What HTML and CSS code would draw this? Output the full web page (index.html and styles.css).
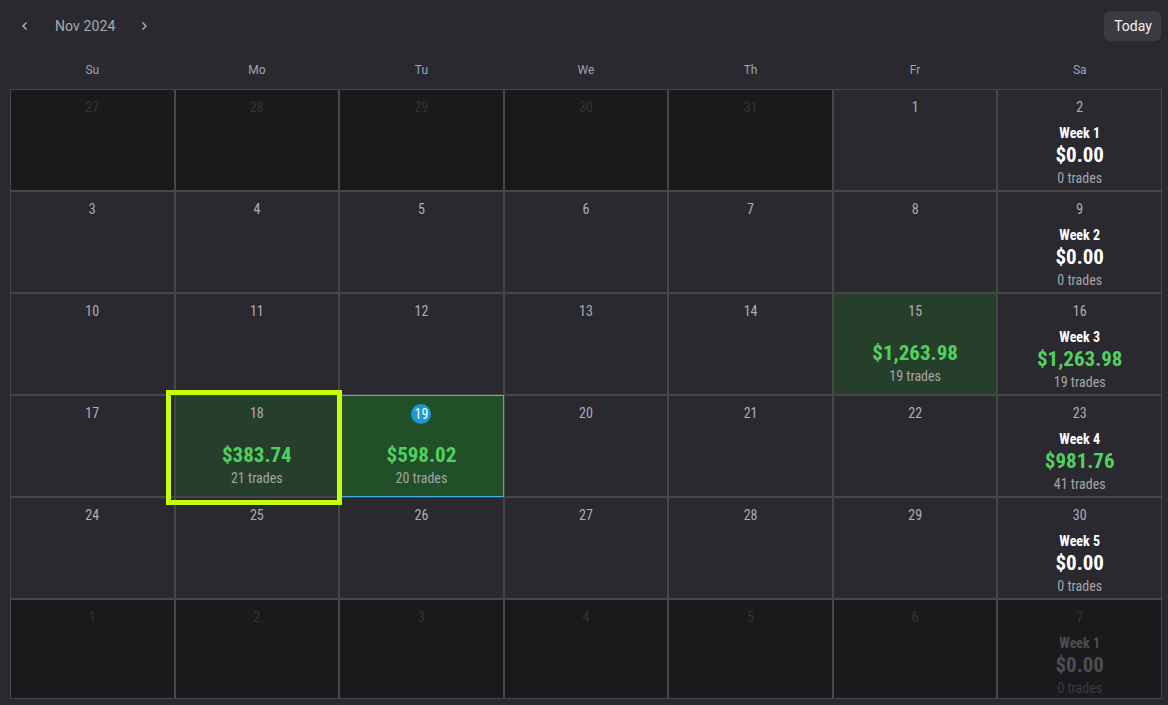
FILE: index.html
```html
<!DOCTYPE html>
<html>
<head>
<meta charset="utf-8">
<link rel="stylesheet" href="styles.css">
</head>
<body>
<div class="app">
  <header class="toolbar">
    <div class="nav">
      <button class="arrow" aria-label="Previous month"><svg width="10" height="10" viewBox="0 0 10 10"><path d="M6.5 1.5 L3 5 L6.5 8.5" fill="none" stroke="#b8b8c0" stroke-width="1.3"/></svg></button>
      <span class="month">Nov 2024</span>
      <button class="arrow" aria-label="Next month"><svg width="10" height="10" viewBox="0 0 10 10"><path d="M3.5 1.5 L7 5 L3.5 8.5" fill="none" stroke="#b8b8c0" stroke-width="1.3"/></svg></button>
    </div>
    <button class="today-btn">Today</button>
  </header>
  <div class="weekdays">
    <div>Su</div><div>Mo</div><div>Tu</div><div>We</div><div>Th</div><div>Fr</div><div>Sa</div>
  </div>
  <div class="grid">
    <!-- row 1 -->
    <div class="cell out"><span class="date">27</span></div>
    <div class="cell out"><span class="date">28</span></div>
    <div class="cell out"><span class="date">29</span></div>
    <div class="cell out"><span class="date">30</span></div>
    <div class="cell out"><span class="date">31</span></div>
    <div class="cell"><span class="date">1</span></div>
    <div class="cell week"><span class="date">2</span><span class="wk">Week 1</span><span class="amt">$0.00</span><span class="trades">0 trades</span></div>
    <!-- row 2 -->
    <div class="cell"><span class="date">3</span></div>
    <div class="cell"><span class="date">4</span></div>
    <div class="cell"><span class="date">5</span></div>
    <div class="cell"><span class="date">6</span></div>
    <div class="cell"><span class="date">7</span></div>
    <div class="cell"><span class="date">8</span></div>
    <div class="cell week"><span class="date">9</span><span class="wk">Week 2</span><span class="amt">$0.00</span><span class="trades">0 trades</span></div>
    <!-- row 3 -->
    <div class="cell"><span class="date">10</span></div>
    <div class="cell"><span class="date">11</span></div>
    <div class="cell"><span class="date">12</span></div>
    <div class="cell"><span class="date">13</span></div>
    <div class="cell"><span class="date">14</span></div>
    <div class="cell profit"><span class="date">15</span><span class="amt pos day-amt">$1,263.98</span><span class="trades">19 trades</span></div>
    <div class="cell week"><span class="date">16</span><span class="wk">Week 3</span><span class="amt pos">$1,263.98</span><span class="trades">19 trades</span></div>
    <!-- row 4 -->
    <div class="cell"><span class="date">17</span></div>
    <div class="cell profit selected"><span class="date">18</span><span class="amt pos day-amt">$383.74</span><span class="trades">21 trades</span><div class="highlight"></div></div>
    <div class="cell today"><span class="date today-badge">19</span><span class="amt pos day-amt">$598.02</span><span class="trades">20 trades</span></div>
    <div class="cell"><span class="date">20</span></div>
    <div class="cell"><span class="date">21</span></div>
    <div class="cell"><span class="date">22</span></div>
    <div class="cell week"><span class="date">23</span><span class="wk">Week 4</span><span class="amt pos">$981.76</span><span class="trades">41 trades</span></div>
    <!-- row 5 -->
    <div class="cell"><span class="date">24</span></div>
    <div class="cell"><span class="date">25</span></div>
    <div class="cell"><span class="date">26</span></div>
    <div class="cell"><span class="date">27</span></div>
    <div class="cell"><span class="date">28</span></div>
    <div class="cell"><span class="date">29</span></div>
    <div class="cell week"><span class="date">30</span><span class="wk">Week 5</span><span class="amt">$0.00</span><span class="trades">0 trades</span></div>
    <!-- row 6 -->
    <div class="cell out"><span class="date">1</span></div>
    <div class="cell out"><span class="date">2</span></div>
    <div class="cell out"><span class="date">3</span></div>
    <div class="cell out"><span class="date">4</span></div>
    <div class="cell out"><span class="date">5</span></div>
    <div class="cell out"><span class="date">6</span></div>
    <div class="cell out week dim"><span class="date">7</span><span class="wk">Week 1</span><span class="amt">$0.00</span><span class="trades">0 trades</span></div>
  </div>
</div>
</body>
</html>
```

FILE: styles.css
```css
* { box-sizing: border-box; }
html, body {
  margin: 0;
  padding: 0;
  background: #2a2930;
  height: 100%;
  overflow: hidden;
}
body {
  font-family: "Roboto", "Liberation Sans", sans-serif;
  color: #b4b4b8;
}
.app {
  padding: 0 6px 0 10px;
}
.toolbar {
  height: 52px;
  display: flex;
  align-items: center;
  justify-content: space-between;
}
.nav {
  display: flex;
  align-items: center;
}
.arrow {
  background: none;
  border: none;
  padding: 0;
  width: 30px;
  height: 28px;
  display: flex;
  align-items: center;
  justify-content: center;
  cursor: pointer;
}
.month {
  font-size: 14px;
  color: #a9a9b0;
  margin: 0 14px 0 15px;
  letter-spacing: 0.1px;
}
.today-btn {
  background: #3b3b41;
  color: #f2f2f4;
  border: none;
  border-radius: 6px;
  font-family: "Roboto", sans-serif;
  font-size: 14px;
  height: 30px;
  width: 57px;
  padding: 0 0 0 1px;
  margin-right: 1px;
}
.weekdays {
  height: 37px;
  display: grid;
  grid-template-columns: repeat(7, 1fr);
  align-items: center;
  padding-bottom: 1px;
}
.weekdays div {
  text-align: center;
  font-size: 12px;
  color: #9ea3b4;
}
.grid {
  display: grid;
  grid-template-columns: repeat(7, 1fr);
  grid-template-rows: repeat(5, 102px) 100px;
}
.cell {
  position: relative;
  border: 1px solid #474649;
  background: #2a2930;
  display: flex;
  flex-direction: column;
  align-items: center;
  padding-top: 8px;
  font-family: "Roboto Condensed", "Liberation Sans Narrow", "Roboto", sans-serif;
}
.cell.out {
  background: #1a1a1c;
}
.date {
  font-size: 14px;
  line-height: 18px;
  color: #aeaeb2;
}
.out .date {
  color: #343437;
}
.wk {
  margin-top: 9px;
  font-size: 14px;
  font-weight: 700;
  line-height: 17px;
  color: #ffffff;
}
.amt {
  margin-top: 1px;
  font-size: 21px;
  font-weight: 700;
  line-height: 25px;
  color: #ffffff;
}
.amt.pos {
  color: #4fd25e;
}
.amt.day-amt {
  margin-top: 21px;
}
.trades {
  font-size: 14px;
  line-height: 17px;
  margin-top: 2px;
  color: #a5a5a8;
}
.cell.profit {
  background: #263f2b;
}
.cell.today {
  background: #214f28;
  border-color: #3cb1e2;
}
.today-badge {
  width: 20px;
  height: 20px;
  margin-top: 0;
  border-radius: 50%;
  background: #1e98d8;
  color: #ffffff;
  display: flex;
  align-items: center;
  justify-content: center;
  font-size: 14px;
}
.today .day-amt {
  margin-top: 19px;
}
.week.dim .wk,
.week.dim .amt {
  color: #4e4e52;
}
.week.dim .trades {
  color: #3b3b3e;
}
.highlight {
  position: absolute;
  z-index: 5;
  left: -10px;
  top: -6px;
  width: 176px;
  height: 115px;
  border: 5px solid #c4ff0e;
  pointer-events: none;
}
```
